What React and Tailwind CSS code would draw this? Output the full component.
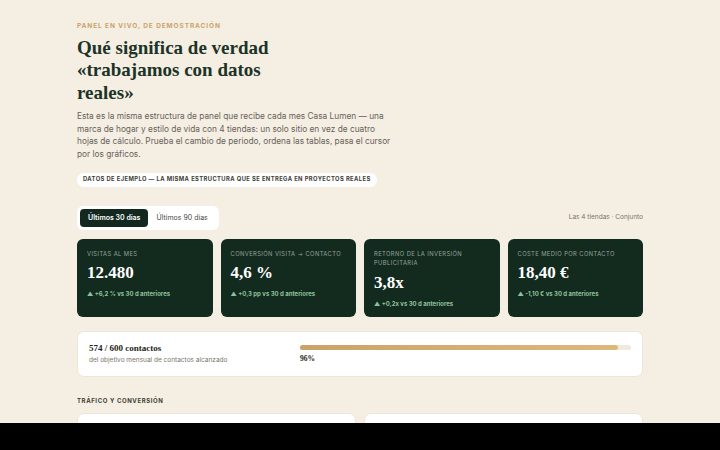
const kpis = [
  { label: 'Visitas al mes', value: '12.480', delta: '▲ +6,2 % vs 30 d anteriores' },
  { label: 'Conversión visita → contacto', value: '4,6 %', delta: '▲ +0,3 pp vs 30 d anteriores' },
  { label: 'Retorno de la inversión publicitaria', value: '3,8x', delta: '▲ +0,2x vs 30 d anteriores' },
  { label: 'Coste medio por contacto', value: '18,40 €', delta: '▲ -1,10 € vs 30 d anteriores' },
];

const serif = { fontFamily: '"Liberation Serif", "DejaVu Serif", serif' };

const App = () => {
  return (
    <div className="min-h-screen bg-[#f5eee3] font-['Inter',sans-serif]">
      <div className="mx-auto w-[566px] pt-[22px]">
        <p className="text-[6.5px] font-bold uppercase tracking-[0.14em] text-[#c9a46a]">
          Panel en vivo, de demostración
        </p>
        <h1
          className="mt-[5px] max-w-[215px] text-[19px] font-bold leading-[22.5px] text-[#1c3327]"
          style={serif}
        >
          Qué significa de verdad «trabajamos con datos reales»
        </h1>
        <p className="mt-[6px] max-w-[318px] text-[8.3px] leading-[12.6px] text-[#66625a]">
          Esta es la misma estructura de panel que recibe cada mes Casa Lumen — una marca de hogar y estilo de vida con 4 tiendas: un solo sitio en vez de cuatro hojas de cálculo. Prueba el cambio de periodo, ordena las tablas, pasa el cursor por los gráficos.
        </p>
        <div className="mt-[12px] inline-flex h-[14px] items-center rounded-full bg-white px-[6px]">
          <span className="text-[5.8px] font-bold uppercase tracking-[0.07em] text-[#3d3d36]">
            Datos de ejemplo — la misma estructura que se entrega en proyectos reales
          </span>
        </div>

        <div className="mt-[19px] flex items-center justify-between">
          <div className="flex items-center rounded-[6px] bg-white p-[3px]">
            <button className="rounded-[4px] bg-[#13291f] px-[8px] py-[3.5px] text-[7px] font-semibold text-white">
              Últimos 30 días
            </button>
            <button className="px-[8px] py-[3.5px] text-[7px] text-[#4a4a42]">Últimos 90 días</button>
          </div>
          <span className="text-[6.5px] text-[#77736a]">Las 4 tiendas · Conjunto</span>
        </div>

        <div className="mt-[9px] grid grid-cols-4 gap-[8px]">
          {kpis.map((k) => (
            <div key={k.label} className="h-[78px] rounded-[6px] bg-[#132a1f] px-[10px] pt-[10px]">
              <p className="text-[5.8px] uppercase leading-[9.5px] tracking-[0.07em] text-[#93a398]">{k.label}</p>
              <p className="mt-[4px] text-[17px] font-bold leading-[22px] text-white" style={serif}>
                {k.value}
              </p>
              <p className="mt-[5px] text-[6px] font-bold text-[#8ec29c]">{k.delta}</p>
            </div>
          ))}
        </div>

        <div className="mt-[14px] flex h-[46px] items-center rounded-[7px] border border-[#ede6d8] bg-white px-[11px]">
          <div className="w-[200px]">
            <p className="text-[9px] font-bold leading-[12px] text-[#1c2620]" style={serif}>
              574 / 600 contactos
            </p>
            <p className="mt-[2px] text-[6.5px] text-[#77736a]">del objetivo mensual de contactos alcanzado</p>
          </div>
          <div className="flex-1 pl-[11px] pt-[1px]">
            <div className="h-[5px] w-full rounded-full bg-[#f0eadd]">
              <div className="h-full rounded-full bg-gradient-to-r from-[#c9a467] to-[#dcb97b]" style={{ width: '96%' }} />
            </div>
            <p className="mt-[3px] text-[7.5px] font-bold text-[#1c2620]" style={serif}>96%</p>
          </div>
        </div>

        <p className="mt-[19px] text-[6px] font-bold uppercase tracking-[0.1em] text-[#3d3d36]">
          Tráfico y conversión
        </p>
        <div className="mt-[8px] grid grid-cols-2 gap-[8px]">
          <div className="h-[120px] rounded-[7px] border border-[#ede6d8] bg-white" />
          <div className="h-[120px] rounded-[7px] border border-[#ede6d8] bg-white" />
        </div>
      </div>
      <div className="fixed bottom-0 left-0 right-0 h-[27px] bg-black" />
    </div>
  );
};

export default App;
